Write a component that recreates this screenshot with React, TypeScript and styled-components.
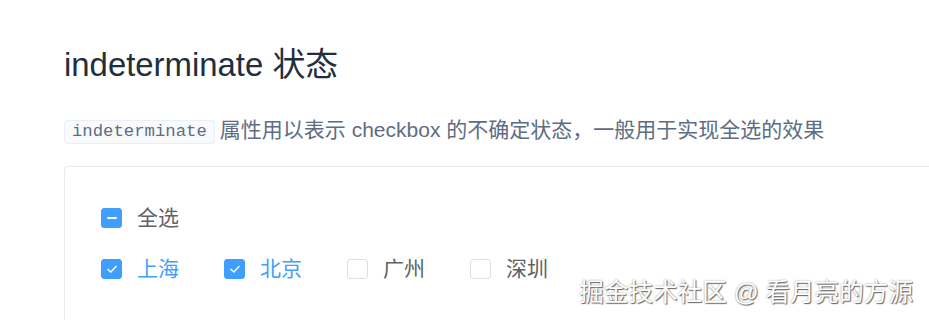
import * as React from "react";
import styled, {createGlobalStyle} from "styled-components";

const GlobalStyle = createGlobalStyle`
  html, body {
    margin: 0;
    background: #fff;
  }
  body {
    font-family: "Liberation Sans", "Noto Sans CJK SC", sans-serif;
    overflow: hidden;
  }
`;

const StyledPage = styled.div`
  position: relative;
  width: 929px;
  height: 320px;
  overflow: hidden;
  padding: 41px 0 0 64px;
  box-sizing: border-box;
`;

const Title = styled.h3`
  margin: 0;
  font-size: 32.9px;
  line-height: 48px;
  font-weight: 400;
  color: #1f2f3d;
`;

const Description = styled.p`
  margin: 25px 0 0;
  font-size: 21px;
  line-height: 31px;
  color: #5e6d82;
`;

const Code = styled.code`
  display: inline-block;
  font-family: "Liberation Mono", monospace;
  font-size: 17.3px;
  line-height: 22px;
  padding: 0 7px;
  margin-right: 5px;
  color: #5e6d82;
  background: #f9fafc;
  border: 1px solid #eaeefb;
  border-radius: 4px;
  vertical-align: 1px;
`;

const DemoBox = styled.div`
  margin-top: 21px;
  border: 1px solid #ebebeb;
  border-right: none;
  border-radius: 4px 0 0 4px;
  padding: 41px 36px 60px;
  display: flex;
  flex-direction: column;
  gap: 31px;
`;

const Row = styled.div`
  display: flex;
  align-items: center;
`;

const Item = styled.label<{$on: boolean}>`
  display: inline-flex;
  align-items: center;
  gap: 15px;
  margin-right: 45px;
  font-size: 21px;
  line-height: 20px;
  color: ${(p) => (p.$on ? "#409eff" : "#606266")};
`;

const Box = styled.span<{$on: boolean}>`
  width: 21px;
  height: 20px;
  box-sizing: border-box;
  border-radius: 3px;
  display: inline-flex;
  align-items: center;
  justify-content: center;
  background: ${(p) => (p.$on ? "#409eff" : "#fff")};
  border: 1px solid ${(p) => (p.$on ? "#409eff" : "#dcdfe6")};
`;

const Dash = styled.span`
  width: 10px;
  height: 2px;
  background: #fff;
  border-radius: 1px;
`;

const Watermark = styled.div`
  position: absolute;
  right: 16px;
  bottom: 14px;
  font-size: 24.6px;
  line-height: 26px;
  color: #fff;
  text-shadow: 1px 1px 1px #666, 0 0 2px #999;
  white-space: nowrap;
`;

type State = "checked" | "indeterminate" | "unchecked";

const Check = ({state, label, labelOn}: {state: State; label: string; labelOn?: boolean}) => (
  <Item $on={!!labelOn}>
    <Box $on={state !== "unchecked"}>
      {state === "indeterminate" && <Dash />}
      {state === "checked" && (
        <svg width="12" height="10" viewBox="0 0 12 10">
          <path d="M1.5 5 L4.8 8 L10.5 2" fill="none" stroke="#fff" strokeWidth="1.4" />
        </svg>
      )}
    </Box>
    {label}
  </Item>
);

const cities = ["上海", "北京", "广州", "深圳"];
const checked = ["上海", "北京"];

export default function App() {
  return (
    <StyledPage>
      <GlobalStyle />
      <Title>indeterminate 状态</Title>
      <Description>
        <Code>indeterminate</Code>属性用以表示 checkbox 的不确定状态，一般用于实现全选的效果
      </Description>
      <DemoBox>
        <Row>
          <Check state="indeterminate" label="全选" />
        </Row>
        <Row>
          {cities.map((c) => {
            const on = checked.includes(c);
            return <Check key={c} state={on ? "checked" : "unchecked"} label={c} labelOn={on} />;
          })}
        </Row>
      </DemoBox>
      <Watermark>掘金技术社区 @ 看月亮的方源</Watermark>
    </StyledPage>
  );
}
